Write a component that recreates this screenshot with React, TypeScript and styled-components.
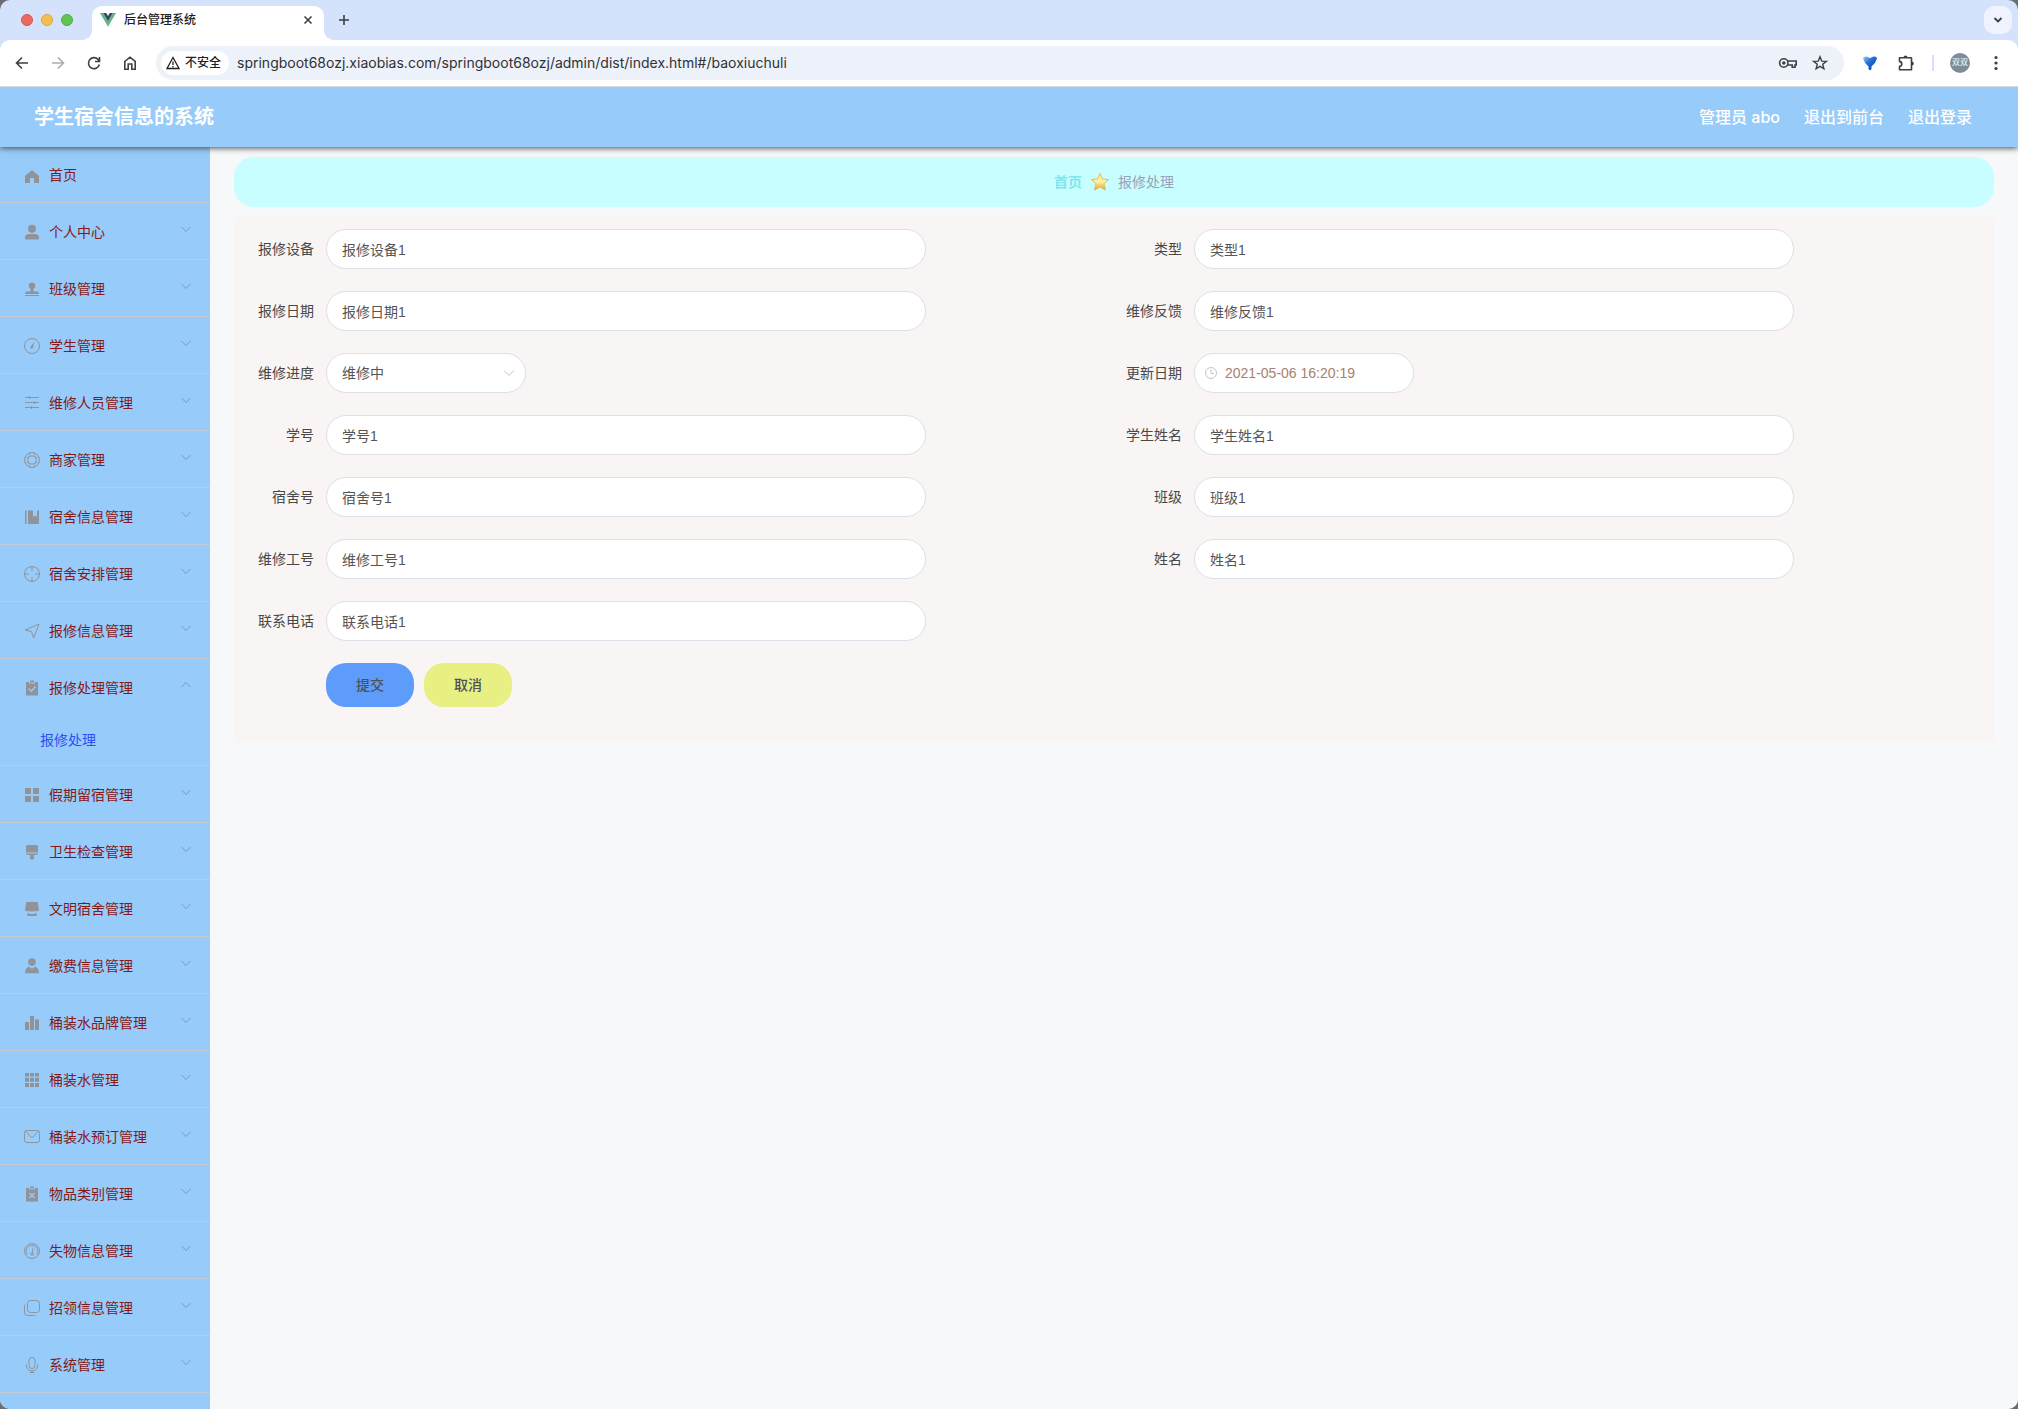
import React, { useState } from "react";
import styled, { createGlobalStyle } from "styled-components";

const GlobalStyle = createGlobalStyle`
  * { box-sizing: border-box; }
  html { background: #6b6d6e; }
  body {
    margin: 0;
    font-family: "Liberation Sans", "Noto Sans CJK SC", sans-serif;
    font-size: 14px;
    line-height: 20px;
    color: #444;
  }
  button, input, select { font: inherit; }
  button { padding: 0; border: 0; background: none; cursor: pointer; }
  a { color: inherit; text-decoration: none; }
`;

const Window = styled.div`
  display: flex;
  flex-direction: column;
  min-height: 100vh;
  border-radius: 10px;
  overflow: hidden;
  background: #d5e2fb;
`;

/* ---------- browser frame ---------- */

const TabStrip = styled.div`
  display: flex;
  align-items: center;
  height: 40px;
  padding: 6px 6px 0 21px;
`;

const Lights = styled.div`
  display: flex;
  gap: 8px;
  margin-right: 19px;
  padding-bottom: 6px;
`;

const Light = styled.span<{ $fill: string; $edge: string }>`
  width: 12px;
  height: 12px;
  border-radius: 50%;
  background: ${(p) => p.$fill};
  border: 1px solid ${(p) => p.$edge};
`;

const Tab = styled.div`
  position: relative;
  display: flex;
  align-items: center;
  width: 232px;
  height: 34px;
  padding: 0 8px 6px;
  border-radius: 10px 10px 0 0;
  background: #fff;
  color: #1f1f1f;
  font-size: 12px;
  &::before, &::after {
    content: "";
    position: absolute;
    bottom: 0;
    width: 10px;
    height: 10px;
  }
  &::before {
    left: -10px;
    background: radial-gradient(circle at 0 0, transparent 10px, #fff 10px);
  }
  &::after {
    right: -10px;
    background: radial-gradient(circle at 100% 0, transparent 10px, #fff 10px);
  }
`;

const TabTitle = styled.span`
  flex: 1;
  margin-left: 8px;
  font-weight: 500;
`;

const FrameButton = styled.button<{ $size?: number; $dim?: boolean }>`
  display: flex;
  align-items: center;
  justify-content: center;
  flex: none;
  width: ${(p) => p.$size || 20}px;
  height: ${(p) => p.$size || 20}px;
  color: ${(p) => (p.$dim ? "#aaacae" : "#3c4043")};
`;

const NewTab = styled(FrameButton)`
  margin: 0 0 6px 10px;
`;

const TabSearch = styled(FrameButton)`
  margin: 0 0 6px auto;
  border-radius: 10px;
  background: #eef3fd;
`;

const Toolbar = styled.div`
  position: relative;
  z-index: 2;
  display: flex;
  align-items: center;
  height: 47px;
  padding: 0 12px 1px;
  border-bottom: 1px solid #d3d9e0;
  border-radius: 10px 10px 0 0;
  background: #fff;
`;

const NavButtons = styled.div`
  display: flex;
  gap: 16px;
  margin-right: 16px;
`;

const Omnibox = styled.div`
  display: flex;
  align-items: center;
  flex: 1;
  height: 34px;
  padding: 0 14px 0 5px;
  border-radius: 17px;
  background: #edf1fa;
  gap: 12px;
`;

const SiteChip = styled.button`
  display: flex;
  align-items: center;
  gap: 5px;
  height: 24px;
  padding: 0 8px 0 5px;
  border-radius: 12px;
  background: #fff;
  color: #1f1f1f;
  font-size: 12px;
  font-weight: 500;
  margin-right: -4px;
`;

const Address = styled.input`
  flex: 1;
  min-width: 0;
  padding: 0;
  border: 0;
  outline: 0;
  background: none;
  color: #303134;
  font-family: Inter, "Noto Sans", sans-serif;
  font-size: 14px;
`;

const Extensions = styled.div`
  display: flex;
  align-items: center;
  gap: 16px;
  margin-left: 16px;
`;

const Divider = styled.span`
  width: 2px;
  height: 16px;
  background: #d3e2fb;
`;

const Avatar = styled.button`
  width: 20px;
  height: 20px;
  border-radius: 50%;
  background: #7b8d99;
  color: #fff;
  font-size: 8px;
  line-height: 20px;
`;

/* ---------- page ---------- */

const Header = styled.header`
  position: relative;
  z-index: 1;
  display: flex;
  align-items: center;
  justify-content: space-between;
  height: 60px;
  padding: 0 46px 0 34px;
  background: #97cbfa;
  box-shadow: 0 1px 6px #444;
  color: #fff;
`;

const SystemName = styled.h1`
  margin: 0;
  font-size: 20px;
  font-weight: 700;
`;

const HeaderNav = styled.nav`
  display: flex;
  gap: 24px;
  font-family: Inter, "Noto Sans CJK SC", sans-serif;
  font-size: 16px;
  font-weight: 500;
`;

const Body = styled.div`
  display: flex;
  flex: 1;
`;

const Sidebar = styled.nav`
  width: 210px;
  flex: none;
  background: #97cbfa;
`;

const MenuGroup = styled.div`
  border-bottom: 1px solid #c6cbd0;
`;

const MenuTitle = styled.button`
  display: flex;
  align-items: center;
  width: 100%;
  height: 56px;
  padding: 0 18px 0 23px;
  line-height: normal;
  color: #841919;
  text-align: left;
  ${MenuGroup}:first-child & {
    height: 55px;
    line-height: 20px;
  }
`;

const MenuText = styled.span`
  flex: 1;
  margin-left: 8px;
`;

const MenuIcon = styled.svg`
  flex: none;
  width: 18px;
  height: 18px;
  margin-top: 2px;
  fill: none;
  stroke: #909399;
  color: #909399;
`;

const Chevron = styled.svg<{ $open?: boolean }>`
  width: 12px;
  height: 12px;
  margin-bottom: 4px;
  fill: none;
  stroke: #7d9ab3;
  transform: ${(p) => (p.$open ? "rotate(180deg)" : "none")};
`;

const SubMenuLink = styled.a`
  display: block;
  height: 50px;
  padding-left: 40px;
  line-height: 50px;
  color: #2b4ff5;
`;

const Main = styled.main`
  flex: 1;
  min-width: 0;
  padding: 10px 24px;
  background: #f6f8fa;
`;

const Breadcrumb = styled.nav`
  display: flex;
  align-items: center;
  justify-content: center;
  gap: 9px;
  height: 50px;
  border-radius: 20px;
  background: #c8feff;
  color: #98a1b5;
`;

const HomeCrumb = styled.a`
  color: #7fe6ee;
  font-weight: 700;
`;

const FormPanel = styled.form`
  display: grid;
  grid-template-columns: 1fr 1fr;
  row-gap: 22px;
  margin-top: 10px;
  padding: 12px 12px 35px;
  background: #f8f5f4;
`;

const Field = styled.div<{ $alone?: boolean }>`
  display: flex;
  align-items: center;
  grid-column: ${(p) => (p.$alone ? "1 / -1" : "auto")};
`;

const FieldLabel = styled.label`
  flex: none;
  width: 80px;
  padding-right: 12px;
  text-align: right;
  color: #484848;
`;

const Control = styled.div<{ $width: number }>`
  position: relative;
  width: ${(p) => p.$width}px;
  min-width: 0;
`;

const TextBox = styled.input<{ $dated?: boolean }>`
  display: block;
  width: 100%;
  height: 40px;
  padding: 0 15px 0 ${(p) => (p.$dated ? 30 : 15)}px;
  border: 1px solid #dcdfe6;
  border-radius: 20px;
  outline: 0;
  background: #fff;
  color: ${(p) => (p.$dated ? "#a5826c" : "#555")};
`;

const Choice = styled.select`
  display: block;
  width: 100%;
  height: 40px;
  padding: 0 30px 0 15px;
  border: 1px solid #dcdfe6;
  border-radius: 20px;
  outline: 0;
  appearance: none;
  background: #fff;
  color: #555;
`;

const ControlIcon = styled.svg<{ $side: "left" | "right" }>`
  position: absolute;
  top: 13px;
  ${(p) => p.$side}: 10px;
  width: 14px;
  height: 14px;
  fill: none;
  stroke: #c0c4cc;
  pointer-events: none;
`;

const Actions = styled.div`
  display: flex;
  grid-column: 1 / -1;
  gap: 10px;
  padding-left: 80px;
`;

const ActionButton = styled.button<{ $fill: string }>`
  width: 88px;
  height: 44px;
  border-radius: 20px;
  background: ${(p) => p.$fill};
  color: #4c5058;
  font-weight: 500;
`;

const icons: Record<string, React.ReactNode> = {
  home: <path d="M9 3 16 9v7h-5v-5H7v5H2V9z" fill="currentColor" stroke="none" />,
  user: (
    <g fill="currentColor" stroke="none">
      <circle cx="9" cy="5.7" r="4" />
      <path d="M2 16.5V15a4 4 0 0 1 4-4h6a4 4 0 0 1 4 4v1.500z" />
    </g>
  ),
  stamp: (
    <g fill="currentColor" stroke="none">
      <circle cx="9" cy="5.800" r="3.200" />
      <path d="M7.800 8h2.400l.5 3.500H14a2 2 0 0 1 2 2v.5H2v-.5a2 2 0 0 1 2-2h3.300zM2 15h14v1H2z" />
    </g>
  ),
  compass: (
    <>
      <circle cx="9" cy="9" r="7.500" />
      <path d="M11.600 5 9.900 10.600a1.300 1.300 0 1 1-2.200-1.200z" fill="currentColor" stroke="none" />
    </>
  ),
  sliders: (
    <path d="M2 3.500h14M2 8.500h14M2 13.500h14M6.500 2v3M11.500 7v3M8.500 12v3" />
  ),
  buoy: (
    <>
      <circle cx="9" cy="9" r="7.500" />
      <rect x="5" y="5" width="8" height="8" rx="3" />
      <path d="M6.500 2v3.200M11.500 2v3.200M6.500 12.800V16M11.500 12.800V16M2 6.500h3.200M12.800 6.500H16M2 11.500h3.200M12.800 11.500H16" strokeWidth=".6" />
    </>
  ),
  book: (
    <path d="M2 2.500h1.500v13.500H2zM5 2.500h5V9l2-1.500L14 9V2.500h2V16H5z" fill="currentColor" stroke="none" />
  ),
  aim: (
    <>
      <circle cx="9" cy="9" r="7.500" />
      <path d="M9 1.500V6M9 12v4.500M1.500 9H6M12 9h4.500" />
    </>
  ),
  send: <path d="M16 2 2.300 8l6.200 1.600L10.600 16z" strokeLinejoin="round" />,
  claim: (
    <>
      <path d="M3 3h3v1.500h6V3h3v13.500H3zM7 1.500h4v2H7z" fill="currentColor" stroke="none" />
      <path d="m5.500 9.500 2.800 2.800L12.700 7.500" stroke="#97cbfa" strokeWidth="1.300" />
    </>
  ),
  squares: (
    <path d="M2 2h6v6H2zM10 2h6v6h-6zM2 10h6v6H2zM10 10h6v6h-6z" fill="currentColor" stroke="none" />
  ),
  brush: (
    <path d="M4 2h10l1 1v6.500H3V3zM3 10.500h12v.500l-1 1h-3v3a1.500 1.500 0 0 1-1.500 1.500h-1A1.500 1.500 0 0 1 7 15v-3H4l-1-1z" fill="currentColor" stroke="none" />
  ),
  shop: (
    <path d="M3.500 2h11L16 9.500a1.700 1.700 0 0 1-3 1.200 2 2 0 0 1-2.700.2 2 2 0 0 1-2.600 0A2 2 0 0 1 5 10.700 1.700 1.700 0 0 1 2 9.500zM4.500 13h1l1 1h5l1-1h1v3h-9z" fill="currentColor" stroke="none" />
  ),
  custom: (
    <g fill="currentColor" stroke="none">
      <circle cx="9" cy="5" r="3.800" />
      <path d="M6 9.500 9 13l3-3.500a7 7 0 0 1 4 6.700H2a7 7 0 0 1 4-6.700z" />
      <path d="m9 10.500 1.300 1.500H7.700z" />
    </g>
  ),
  bars: <path d="M2 8h4v8H2zM7 2h4v14H7zM12 5.500h4V16h-4z" fill="currentColor" stroke="none" />,
  grid: (
    <path d="M2 2h4v3.500H2zM7 2h4v3.500H7zM12 2h4v3.500h-4zM2 6.700h4v4H2zM7 6.700h4v4H7zM12 6.700h4v4h-4zM2 12h4v4H2zM7 12h4v4H7zM12 12h4v4h-4z" fill="currentColor" stroke="none" />
  ),
  mail: (
    <>
      <rect x="1.500" y="2.500" width="15" height="12" rx="2" />
      <path d="m2.500 3 5.300 6q1.200 1 2.400 0l5.300-6" />
    </>
  ),
  release: (
    <>
      <path d="M3 3h3v1.500h6V3h3v13.500H3zM7 1.500h4v2H7z" fill="currentColor" stroke="none" />
      <path d="m6.500 8 5 5M11.500 8l-5 5" stroke="#97cbfa" strokeWidth="1.300" />
    </>
  ),
  gauge: (
    <>
      <circle cx="9" cy="9" r="7.500" />
      <path d="M4.500 12.500a5.700 5.700 0 1 1 9 0M10 5.500 9.500 11" />
      <circle cx="9" cy="12" r="1.300" />
    </>
  ),
  copy: (
    <>
      <rect x="4.500" y="1.500" width="12" height="12" rx="3" />
      <path d="M2 5.500q-.5.500-.5 2v6a3 3 0 0 0 3 3h6q1.500 0 2-.500" />
    </>
  ),
  mic: (
    <>
      <rect x="6" y="1.500" width="6" height="11" rx="3" />
      <path d="M3.500 8.500v1.500a5.500 5 0 0 0 11 0V8.500M9 15v2M6.500 16.500h5" />
    </>
  ),
};

const menu: { text: string; icon: string; child?: string }[] = [
  { text: "首页", icon: "home" },
  { text: "个人中心", icon: "user" },
  { text: "班级管理", icon: "stamp" },
  { text: "学生管理", icon: "compass" },
  { text: "维修人员管理", icon: "sliders" },
  { text: "商家管理", icon: "buoy" },
  { text: "宿舍信息管理", icon: "book" },
  { text: "宿舍安排管理", icon: "aim" },
  { text: "报修信息管理", icon: "send" },
  { text: "报修处理管理", icon: "claim", child: "报修处理" },
  { text: "假期留宿管理", icon: "squares" },
  { text: "卫生检查管理", icon: "brush" },
  { text: "文明宿舍管理", icon: "shop" },
  { text: "缴费信息管理", icon: "custom" },
  { text: "桶装水品牌管理", icon: "bars" },
  { text: "桶装水管理", icon: "grid" },
  { text: "桶装水预订管理", icon: "mail" },
  { text: "物品类别管理", icon: "release" },
  { text: "失物信息管理", icon: "gauge" },
  { text: "招领信息管理", icon: "copy" },
  { text: "系统管理", icon: "mic" },
];

type FieldSpec = { label: string; value: string; kind?: "select" | "date"; alone?: boolean };

const fields: FieldSpec[] = [
  { label: "报修设备", value: "报修设备1" },
  { label: "类型", value: "类型1" },
  { label: "报修日期", value: "报修日期1" },
  { label: "维修反馈", value: "维修反馈1" },
  { label: "维修进度", value: "维修中", kind: "select" },
  { label: "更新日期", value: "2021-05-06 16:20:19", kind: "date" },
  { label: "学号", value: "学号1" },
  { label: "学生姓名", value: "学生姓名1" },
  { label: "宿舍号", value: "宿舍号1" },
  { label: "班级", value: "班级1" },
  { label: "维修工号", value: "维修工号1" },
  { label: "姓名", value: "姓名1" },
  { label: "联系电话", value: "联系电话1", alone: true },
];

function FormField({ spec, id }: { spec: FieldSpec; id: string }) {
  return (
    <Field $alone={spec.alone}>
      <FieldLabel htmlFor={id}>{spec.label}</FieldLabel>
      {spec.kind === "select" ? (
        <Control $width={200}>
          <Choice id={id} defaultValue={spec.value}>
            <option>{spec.value}</option>
          </Choice>
          <ControlIcon $side="right" viewBox="0 0 14 14">
            <path d="m2 4.500 5 5 5-5" />
          </ControlIcon>
        </Control>
      ) : spec.kind === "date" ? (
        <Control $width={220}>
          <TextBox id={id} $dated defaultValue={spec.value} />
          <ControlIcon $side="left" viewBox="0 0 14 14">
            <circle cx="7" cy="7" r="5.500" />
            <path d="M7 3.500v4h3" />
          </ControlIcon>
        </Control>
      ) : (
        <Control $width={600}>
          <TextBox id={id} defaultValue={spec.value} />
        </Control>
      )}
    </Field>
  );
}

function BrowserFrame() {
  const line = { fill: "none", stroke: "currentColor", strokeWidth: 1.6 };
  return (
    <>
      <TabStrip>
        <Lights>
          <Light $fill="#ed6a5e" $edge="#d9574c" />
          <Light $fill="#f5bf4f" $edge="#dfa63c" />
          <Light $fill="#61c454" $edge="#4fae41" />
        </Lights>
        <Tab>
          <svg width="16" height="16" viewBox="0 0 16 16">
            <path d="M0 1h3.200L8 9.200 12.800 1H16L8 14.800z" fill="#62b78a" />
            <path d="M3.200 1h3L8 4l1.800-3h3L8 9.200z" fill="#35495e" />
          </svg>
          <TabTitle>后台管理系统</TabTitle>
          <FrameButton $size={16} aria-label="关闭标签页">
            <svg width="10" height="10" viewBox="0 0 10 10" {...line}>
              <path d="m1.500 1.500 7 7M8.500 1.500l-7 7" />
            </svg>
          </FrameButton>
        </Tab>
        <NewTab aria-label="新标签页">
          <svg width="12" height="12" viewBox="0 0 12 12" {...line}>
            <path d="M6 1v10M1 6h10" />
          </svg>
        </NewTab>
        <TabSearch $size={28} aria-label="搜索标签页">
          <svg width="10" height="10" viewBox="0 0 10 10" {...line} strokeWidth="1.800">
            <path d="m1.500 3 3.500 3.500L8.500 3" />
          </svg>
        </TabSearch>
      </TabStrip>
      <Toolbar>
        <NavButtons>
          <FrameButton aria-label="后退">
            <svg width="16" height="16" viewBox="0 0 16 16" {...line}>
              <path d="M14 8H3M8 2.500 2.500 8 8 13.500" />
            </svg>
          </FrameButton>
          <FrameButton $dim aria-label="前进">
            <svg width="16" height="16" viewBox="0 0 16 16" {...line}>
              <path d="M2 8h11M8 2.500 13.500 8 8 13.500" />
            </svg>
          </FrameButton>
          <FrameButton aria-label="重新加载">
            <svg width="16" height="16" viewBox="0 0 16 16" {...line}>
              <path d="M13.300 9.500A5.500 5.500 0 1 1 12.500 5L13.500 6.300M13.500 2v4.500H9" />
            </svg>
          </FrameButton>
          <FrameButton aria-label="主页">
            <svg width="16" height="16" viewBox="0 0 16 16" {...line}>
              <path d="M2.800 6.500 8 2.200l5.200 4.300v7.700H9.800V9H6.200v5.200H2.800z" />
            </svg>
          </FrameButton>
        </NavButtons>
        <Omnibox>
          <SiteChip>
            <svg width="14" height="14" viewBox="0 0 14 14" {...line} strokeWidth="1.300">
              <path d="M7 1.500 13 12.500H1zM7 5.500v3.500M7 10v1.200" />
            </svg>
            不安全
          </SiteChip>
          <Address
            aria-label="地址"
            defaultValue="springboot68ozj.xiaobias.com/springboot68ozj/admin/dist/index.html#/baoxiuchuli"
          />
          <FrameButton aria-label="密码">
            <svg width="20" height="14" viewBox="0 0 20 14" {...line}>
              <circle cx="5.800" cy="7" r="4.200" />
              <path d="M9.500 5h8.700v4H17v2.200h-2.800V9H9.500" />
              <circle cx="5.800" cy="7" r="1.800" fill="currentColor" stroke="none" />
            </svg>
          </FrameButton>
          <FrameButton aria-label="收藏">
            <svg width="16" height="16" viewBox="0 0 16 16" {...line} strokeWidth="1.400">
              <path d="m8 1.800 1.700 4.300 4.600.300-3.600 2.900 1.200 4.500L8 11.300l-3.900 2.500 1.200-4.500L1.700 6.400l4.600-.3z" />
            </svg>
          </FrameButton>
        </Omnibox>
        <Extensions>
          <FrameButton aria-label="扩展">
            <svg width="16" height="16" viewBox="0 0 16 16">
              <defs>
                <linearGradient id="gem" x1="0" x2="1" y1="0" y2="1">
                  <stop offset="0" stopColor="#9fd4fb" />
                  <stop offset=".4" stopColor="#2670dc" />
                  <stop offset="1" stopColor="#0a3aa0" />
                </linearGradient>
              </defs>
              <path d="M1 3.500Q1.500 1 4.500 1.500L8 3l3.500-1.500Q14.500 1 15 3.500 14 7.500 9.500 11.500V14L8 15.500 6.500 14v-2.500Q2 7.500 1 3.500z" fill="url(#gem)" />
            </svg>
          </FrameButton>
          <FrameButton aria-label="管理扩展">
            <svg width="18" height="18" viewBox="0 0 18 18" {...line}>
              <path d="M2.500 3.800h12v12h-12v-3.600a2.300 2.300 0 0 0 0-4.600z" strokeLinejoin="round" />
              <path d="M6.500 3.500a2 2 0 0 1 4 0zM14.800 7.500a2 2 0 0 1 0 4z" fill="currentColor" stroke="none" />
            </svg>
          </FrameButton>
          <Divider />
          <Avatar aria-label="用户">双双</Avatar>
          <FrameButton aria-label="菜单">
            <svg width="4" height="16" viewBox="0 0 4 16" fill="currentColor">
              <circle cx="2" cy="2.500" r="1.600" />
              <circle cx="2" cy="8" r="1.600" />
              <circle cx="2" cy="13.500" r="1.600" />
            </svg>
          </FrameButton>
        </Extensions>
      </Toolbar>
    </>
  );
}

export default function App() {
  const [open, setOpen] = useState("报修处理管理");
  return (
    <Window>
      <GlobalStyle />
      <BrowserFrame />
      <Header>
        <SystemName>学生宿舍信息的系统</SystemName>
        <HeaderNav>
          <span>管理员 abo</span>
          <a href="#front">退出到前台</a>
          <a href="#login">退出登录</a>
        </HeaderNav>
      </Header>
      <Body>
        <Sidebar>
          {menu.map((m, i) => (
            <MenuGroup key={m.text}>
              <MenuTitle onClick={() => setOpen(open === m.text ? "" : m.text)}>
                <MenuIcon viewBox="0 0 18 18">{icons[m.icon]}</MenuIcon>
                <MenuText>{m.text}</MenuText>
                {i > 0 && (
                  <Chevron viewBox="0 0 12 12" $open={open === m.text}>
                    <path d="m1.500 4 4.500 4.500L10.500 4" />
                  </Chevron>
                )}
              </MenuTitle>
              {m.child && open === m.text && (
                <SubMenuLink href="#/baoxiuchuli">{m.child}</SubMenuLink>
              )}
            </MenuGroup>
          ))}
        </Sidebar>
        <Main>
          <Breadcrumb>
            <HomeCrumb href="#/">首页</HomeCrumb>
            <svg width="18" height="18" viewBox="0 0 18 18">
              <defs>
                <linearGradient id="gold" x1="0" x2="0" y1="0" y2="1">
                  <stop offset="0" stopColor="#fbf3a0" />
                  <stop offset=".5" stopColor="#fdf0a0" />
                  <stop offset="1" stopColor="#eda321" />
                </linearGradient>
              </defs>
              <path
                d="m9 .500 2.400 5.500 6.200.600-4.700 4.100 1.500 6.400L9 13.900l-5.400 3.200 1.500-6.400L.400 6.600 6.600 6z"
                fill="url(#gold)"
                stroke="#e0b040"
                strokeWidth=".800"
                strokeLinejoin="round"
              />
            </svg>
            <span>报修处理</span>
          </Breadcrumb>
          <FormPanel onSubmit={(e) => e.preventDefault()}>
            {fields.map((f, i) => (
              <FormField key={f.label} spec={f} id={`field-${i}`} />
            ))}
            <Actions>
              <ActionButton type="submit" $fill="#5d9cfb">提交</ActionButton>
              <ActionButton type="button" $fill="#e8f083">取消</ActionButton>
            </Actions>
          </FormPanel>
        </Main>
      </Body>
    </Window>
  );
}
